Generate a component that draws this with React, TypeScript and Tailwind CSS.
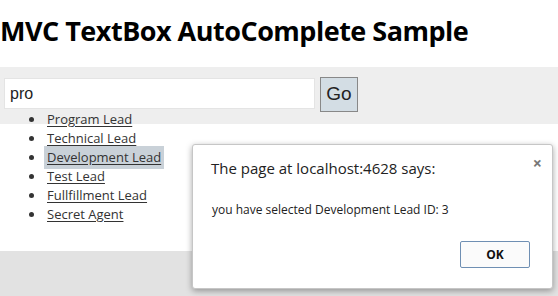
const ITEMS = [
  'Program Lead',
  'Technical Lead',
  'Development Lead',
  'Test Lead',
  'Fullfillment Lead',
  'Secret Agent',
]

export default function App() {
  return (
    <div className="relative w-[558px] h-[296px] overflow-hidden bg-white font-['Open_Sans',sans-serif] text-black">
      <h1 className="h-[67px] pt-[13px] text-[27px] font-bold leading-[36px] tracking-[-0.5px]">
        MVC TextBox AutoComplete Sample
      </h1>

      <div className="h-[57px] bg-[#eeeeee] flex items-start pt-[10px] pl-[4px] gap-[5px]">
        <input
          readOnly
          value="pro"
          className="mt-[1px] w-[311px] h-[31px] bg-white border border-[#e4e4e4] px-[5px] text-[16px] text-[#222] font-['Liberation_Sans',sans-serif] outline-none"
        />
        <button className="w-[38px] h-[35px] bg-[#d3dde4] border border-[#888] text-[19px] text-[#222] font-['Liberation_Sans',sans-serif]">
          Go
        </button>
      </div>

      <div className="h-[127px] bg-white" />
      <div className="h-[45px] bg-[#e2e2e2]" />

      {/* autocomplete dropdown */}
      <ul className="absolute left-0 top-[110px] flex flex-col text-[13px] leading-[19px] text-[#333]">
        {ITEMS.map((item) => (
          <li key={item} className="flex items-center h-[19px] pl-[29px] gap-[13px]">
            <span className="w-[5px] h-[5px] rounded-full bg-[#333]" />
            <span
              className={
                item === 'Development Lead'
                  ? 'underline underline-offset-2 bg-[#c9d1d8] px-[3px] py-[2px] -mx-[3px]'
                  : 'underline underline-offset-2'
              }
            >
              {item}
            </span>
          </li>
        ))}
      </ul>

      {/* alert dialog */}
      <div className="absolute left-[192px] top-[144px] w-[361px] h-[145px] flex flex-col bg-white border border-[#c6c6c6] rounded-[3px] shadow-[0_2px_6px_rgba(0,0,0,0.35)]">
        <div className="flex justify-between pl-[18px] pr-[10px] pt-[10px]">
          <p className="mt-[2px] text-[15px] leading-[22px] text-[#222]">
            The page at localhost:4628 says:
          </p>
          <span className="text-[16px] leading-[16px] font-bold text-[#777]">×</span>
        </div>
        <p className="pl-[19px] mt-[23px] text-[12px] leading-[16px] text-[#222]">
          you have selected Development Lead ID: 3
        </p>
        <div className="flex justify-end pr-[22px] mt-[23px]">
          <button className="w-[70px] h-[27px] bg-[#fbfbfb] border border-[#6f8fb3] rounded-[2px] text-[12px] font-bold text-[#111]">
            OK
          </button>
        </div>
      </div>
    </div>
  )
}
